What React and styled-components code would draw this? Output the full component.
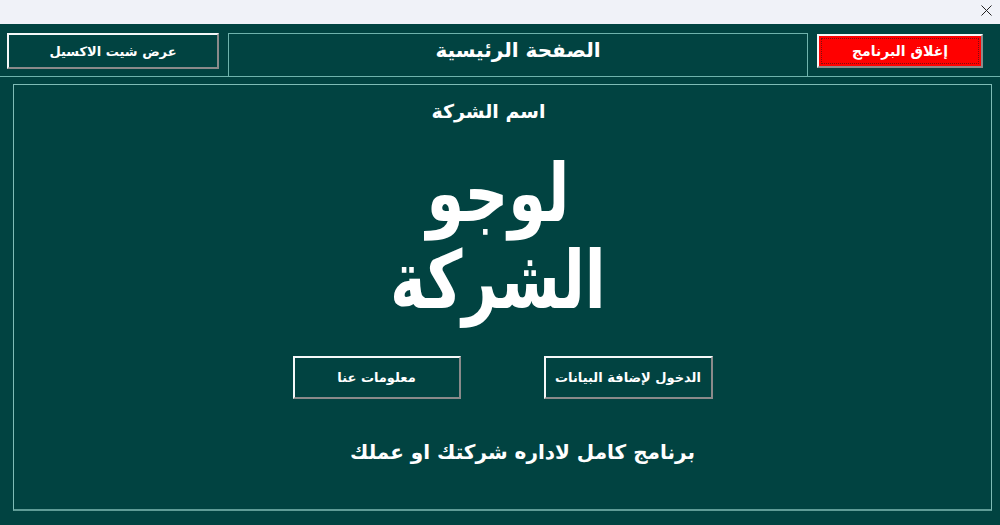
import React from "react";
import styled, { createGlobalStyle } from "styled-components";

const Global = createGlobalStyle`
  html, body { margin: 0; padding: 0; overflow: hidden; }
  body { width: 1000px; height: 525px; background: #004040; font-family: "DejaVu Sans", "Noto Sans", sans-serif; }
  * { box-sizing: border-box; }
`;

const Window = styled.div`
  width: 1000px;
  height: 525px;
  display: flex;
  flex-direction: column;
  background: #014341;
`;

const TitleBar = styled.div`
  height: 24px;
  background: #f0f2f8;
  display: flex;
  justify-content: flex-end;
  align-items: center;
  padding-right: 8px;
`;

const CloseIcon = styled.svg`
  width: 11px;
  height: 11px;
  margin-bottom: 4px;
`;

const Header = styled.div`
  direction: ltr;
  display: flex;
  align-items: flex-start;
  height: 53px;
  padding: 9px 17px 0 7px;
  gap: 9px;
  border-bottom: 1px solid #6fb3ac;
`;

const BevelButton = styled.button`
  font-family: "DejaVu Sans", sans-serif;
  font-weight: bold;
  font-size: ${(p) => p.$size || 13}px;
  color: #fff;
  background: ${(p) => p.$bg || "transparent"};
  width: ${(p) => p.$w}px;
  height: ${(p) => p.$h}px;
  margin-top: ${(p) => p.$mt || 0}px;
  border: 2px solid;
  border-color: #f4f8f8 #8a8a8a #8a8a8a #f4f8f8;
  outline: ${(p) => (p.$focus ? "1px dotted #7a1010" : "none")};
  outline-offset: -5px;
  padding: 0;
  direction: rtl;
  flex-shrink: 0;
  cursor: pointer;
`;

const TitlePanel = styled.div`
  flex: 1;
  height: 44px;
  border: 1px solid #6fb3ac;
  border-bottom: none;
  display: flex;
  justify-content: center;
  align-items: flex-start;
  padding-top: 4px;
  color: #fff;
  font-weight: bold;
  font-size: 20px;
  direction: rtl;
`;

const Main = styled.div`
  margin: 7px 8px 0 13px;
  height: 427px;
  border: 1px solid #7fbcb6;
  border-bottom: 2px solid #5f9c96;
  display: flex;
  flex-direction: column;
  align-items: center;
  color: #fff;
  direction: rtl;
`;

const CompanyName = styled.div`
  margin-top: 15px;
  margin-right: 28px;
  font-size: 19px;
  font-weight: bold;
`;

const Logo = styled.div`
  margin-top: 28px;
  margin-right: 10px;
  font-size: 80px;
  font-weight: bold;
  line-height: 87px;
  text-align: center;
  transform: scaleX(0.76);
`;

const ButtonRow = styled.div`
  direction: ltr;
  display: flex;
  gap: 83px;
  margin-top: 32px;
`;

const Tagline = styled.div`
  margin-top: 41px;
  margin-left: 40px;
  font-size: 20px;
  font-weight: bold;
`;

export default function App() {
  return (
    <>
      <Global />
      <Window>
        <TitleBar>
          <CloseIcon viewBox="0 0 11 11">
            <path d="M0.5 0.5 L10.5 10.5 M10.5 0.5 L0.5 10.5" stroke="#222" strokeWidth="1" />
          </CloseIcon>
        </TitleBar>
        <Header>
          <BevelButton $w={212} $h={36}>عرض شيت الاكسيل</BevelButton>
          <TitlePanel>الصفحة الرئيسية</TitlePanel>
          <BevelButton $w={166} $h={34} $mt={1} $bg="#ff0000" $focus $size={14}>
            إغلاق البرنامج
          </BevelButton>
        </Header>
        <Main>
          <CompanyName>اسم الشركة</CompanyName>
          <Logo>
            لوجو
            <br />
            الشركة
          </Logo>
          <ButtonRow>
            <BevelButton $w={168} $h={43}>معلومات عنا</BevelButton>
            <BevelButton $w={169} $h={43}>الدخول لإضافة البيانات</BevelButton>
          </ButtonRow>
          <Tagline>برنامج كامل لاداره شركتك او عملك</Tagline>
        </Main>
      </Window>
    </>
  );
}
